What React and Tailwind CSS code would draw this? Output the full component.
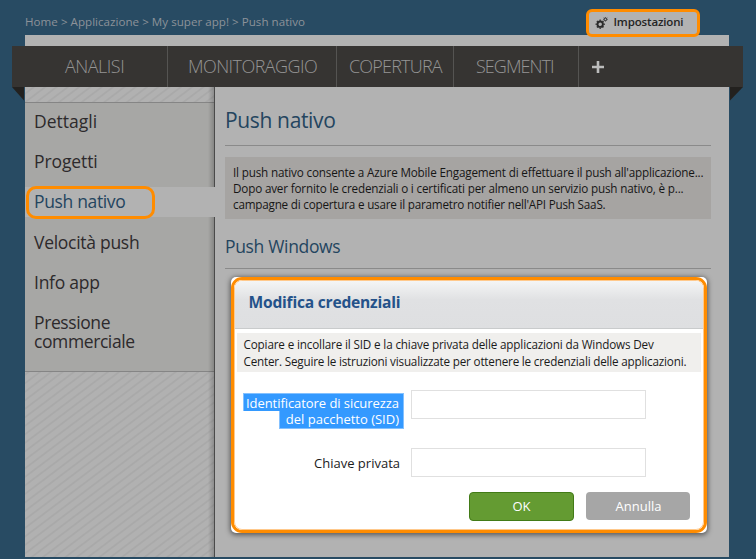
const hatch =
  "bg-[repeating-linear-gradient(143deg,#b1b1b1_0px,#b1b1b1_4px,#a9a9a9_5px,#a9a9a9_5.8px,#b1b1b1_6.8px)]";

const menu = [
  { label: "Dettagli", style: "h-[40px] tracking-[0]" },
  { label: "Progetti", style: "h-[40px] tracking-[-0.1px]" },
  { label: "Push nativo", style: "h-[41px] tracking-[-0.35px]", active: true },
  { label: "Velocità push", style: "h-[40px] tracking-[-0.28px]" },
  { label: "Info app", style: "h-[40px] tracking-[-0.25px]" },
];

function Gear({ cx, cy, r, w, teeth }) {
  const angles = Array.from({ length: teeth }, (_, i) => (i * 360) / teeth);
  return (
    <g stroke="#2b2b2b" fill="none">
      <circle cx={cx} cy={cy} r={r} strokeWidth={w} />
      {angles.map((a) => (
        <path
          key={a}
          d={`M${cx} ${cy - r - w / 2 + 0.2}v${-w * 0.6}`}
          strokeWidth={w * 0.85}
          transform={`rotate(${a} ${cx} ${cy})`}
        />
      ))}
    </g>
  );
}

function Tabs() {
  return (
    <nav className="relative -mx-[13px] flex h-[41px] w-[731px] bg-[#363432] text-[18px] font-light leading-[41px] text-[#959595]">
      <div className="w-[156px] border-r border-[#555452] pl-[53px] tracking-[-0.5px]">ANALISI</div>
      <div className="w-[169px] border-r border-[#555452] pl-[20px] tracking-[-0.56px]">MONITORAGGIO</div>
      <div className="w-[117px] border-r border-[#555452] pl-[12px] tracking-[-0.8px]">COPERTURA</div>
      <div className="w-[125px] border-r border-[#555452] pl-[22px] tracking-[-0.95px]">SEGMENTI</div>
      <svg className="ml-[13px] mt-[15px]" width="12" height="12" viewBox="0 0 12 12">
        <path d="M6 0v12M0 6h12" stroke="#bcbcbc" strokeWidth="2.6" />
      </svg>
      <svg className="absolute left-0 top-full" width="12" height="14">
        <path d="M0 0H12V13.5Z" fill="#23211f" />
      </svg>
      <svg className="absolute right-0 top-full" width="13" height="14">
        <path d="M0 0H13L0 13.5Z" fill="#23211f" />
      </svg>
    </nav>
  );
}

function Sidebar() {
  return (
    <aside className={`relative flex w-[190px] shrink-0 flex-col border-r border-[#4a4a4a] ${hatch}`}>
      <div className="mt-[15px] h-[270px] border-y border-[#858585] bg-[#a7a7a5] text-[17.5px] text-[#2d2a2c]">
        {menu.map((m) => (
          <div key={m.label} className={`relative flex items-start ${m.style}`}>
            {m.active && (
              <>
                <div className="absolute left-0 top-[4px] z-10 h-[30px] w-[191px] bg-[#b2b2b2]" />
                <div className="absolute left-[1px] top-[3px] z-10 h-[33px] w-[129px] rounded-[10px] border-3 border-[#ff8c00]" />
              </>
            )}
            <span className={`relative z-10 pl-[9px] leading-[36px] ${m.active ? "text-[#24455f]" : ""}`}>{m.label}</span>
          </div>
        ))}
        <div className="pl-[9px] pt-[9px] leading-[19px] tracking-[-0.4px]">
          Pressione
          <br />
          commerciale
        </div>
      </div>
      <div className="absolute inset-y-0 right-0 w-[6px] bg-gradient-to-r from-transparent to-black/20" />
    </aside>
  );
}

function Dialog() {
  return (
    <div className="absolute left-[231px] top-[277px] h-[256px] w-[476px] rounded-[5px] bg-white shadow-[0_1px_5px_1px_rgba(0,0,0,0.5)]">
      <div className="h-full overflow-hidden rounded-[11px] border-3 border-[#ff8c00] bg-white">
        <div className="flex h-full flex-col rounded-[8px] border border-[#ffc98c]">
          <div className="h-[48px] shrink-0 rounded-t-[7px] border-b border-[#c9cbcc] bg-gradient-to-b from-[#f4f5f5] via-[#e0e1e3] via-40% to-[#dedfe1] pl-[13.5px] text-[15.6px] font-bold leading-[43px] tracking-[-0.22px] text-[#24528a]">
            Modifica credenziali
          </div>
          <div className="ml-[2px] mt-[4px] h-[39px] w-[464px] shrink-0 whitespace-nowrap bg-[#f0efed] pl-[6.5px] pt-[3px] text-[11.7px] leading-[17px] text-[#1b1b1b]">
            <div className="tracking-[-0.15px]">Copiare e incollare il SID e la chiave privata delle applicazioni da Windows Dev</div>
            <div className="tracking-[-0.19px]">Center. Seguire le istruzioni visualizzate per ottenere le credenziali delle applicazioni.</div>
          </div>
          <div className="mt-[18px] flex text-[13px]">
            <div className="mt-[3px] flex w-[169px] flex-col items-end text-white">
              <div className="relative z-10 h-[18px] whitespace-nowrap border border-b-0 border-[#84c1ff] bg-[#3399ff] pl-[2px] pr-[4px] leading-[19px] tracking-[-0.06px]">
                Identificatore di sicurezza
              </div>
              <div className="h-[18px] border border-t-0 border-[#84c1ff] bg-[#3399ff] pl-[6px] pr-[4px] leading-[16px]">
                del pacchetto (SID)
              </div>
            </div>
            <div className="ml-[7px] h-[29px] w-[235px] border border-[#e0e0e0] bg-white" />
          </div>
          <div className="mt-[19px] flex text-[13px] leading-[30px] text-[#1b1b1b]">
            <div className="w-[165px] text-right">Chiave privata</div>
            <div className="ml-[11px] h-[29px] w-[235px] border border-[#e0e0e0] bg-white" />
          </div>
          <div className="ml-[234px] mt-[14px] flex gap-[12px] text-center text-[13px] text-white">
            <div className="h-[29px] w-[105px] rounded-[4px] border border-[#427b17] bg-[#649b32] leading-[27px]">OK</div>
            <div className="h-[28px] w-[104px] rounded-[4px] bg-[#a6a6a6] pl-[1px] leading-[28px]">Annulla</div>
          </div>
        </div>
      </div>
    </div>
  );
}

export default function App() {
  return (
    <div className="relative h-[559px] w-[756px] overflow-hidden bg-[#284b63] font-['Open_Sans','Noto_Sans',sans-serif]">
      <header className="h-[35px] pl-[25px] pt-[13px] text-[11.6px] leading-[18px] tracking-[0.02px] text-[#8c9299]">
        Home &gt; Applicazione &gt; My super app! &gt; Push nativo
      </header>

      <div className="ml-[25px] flex h-[522px] w-[704px] flex-col bg-[#b2b2b2] pt-[11px]">
        <Tabs />
        <div className="flex flex-1">
          <Sidebar />
          <main className="ml-[10px] w-[486px]">
            <h1 className="h-[59px] border-b border-[#8a8a8a] pt-[18px] text-[21px] leading-[30px] tracking-[-0.35px] text-[#24455f]">
              Push nativo
            </h1>
            <div className="mt-[11px] h-[62px] whitespace-nowrap bg-[#a6a4a2] pl-[8px] pt-[7px] text-[11.7px] leading-[16px] text-[#161616]">
              <div className="tracking-[-0.17px]">Il push nativo consente a Azure Mobile Engagement di effettuare il push all'applicazione...</div>
              <div className="tracking-[-0.17px]">Dopo aver fornito le credenziali o i certificati per almeno un servizio push nativo, è p...</div>
              <div className="tracking-[-0.21px]">campagne di copertura e usare il parametro notifier nell'API Push SaaS.</div>
            </div>
            <h2 className="h-[50px] border-b border-[#8a8a8a] pt-[15px] text-[17.5px] leading-[25px] tracking-[-0.33px] text-[#24455f]">
              Push Windows
            </h2>
          </main>
        </div>
      </div>

      <div className="absolute left-[586px] top-[9px] flex h-[28px] w-[114px] rounded-[6px] border-3 border-[#ff8c00] bg-[#b2b2b2]">
        <svg className="ml-[6px] mt-[4px]" width="14" height="14" viewBox="0 0 14 14">
          <Gear cx={5.2} cy={8.2} r={2.7} w={1.9} teeth={8} />
          <Gear cx={10.4} cy={3.3} r={1.3} w={1} teeth={8} />
        </svg>
        <span className="ml-[4.5px] text-[11.5px] font-semibold leading-[19px] tracking-[-0.15px] text-[#242424]">Impostazioni</span>
      </div>

      <Dialog />
    </div>
  );
}
